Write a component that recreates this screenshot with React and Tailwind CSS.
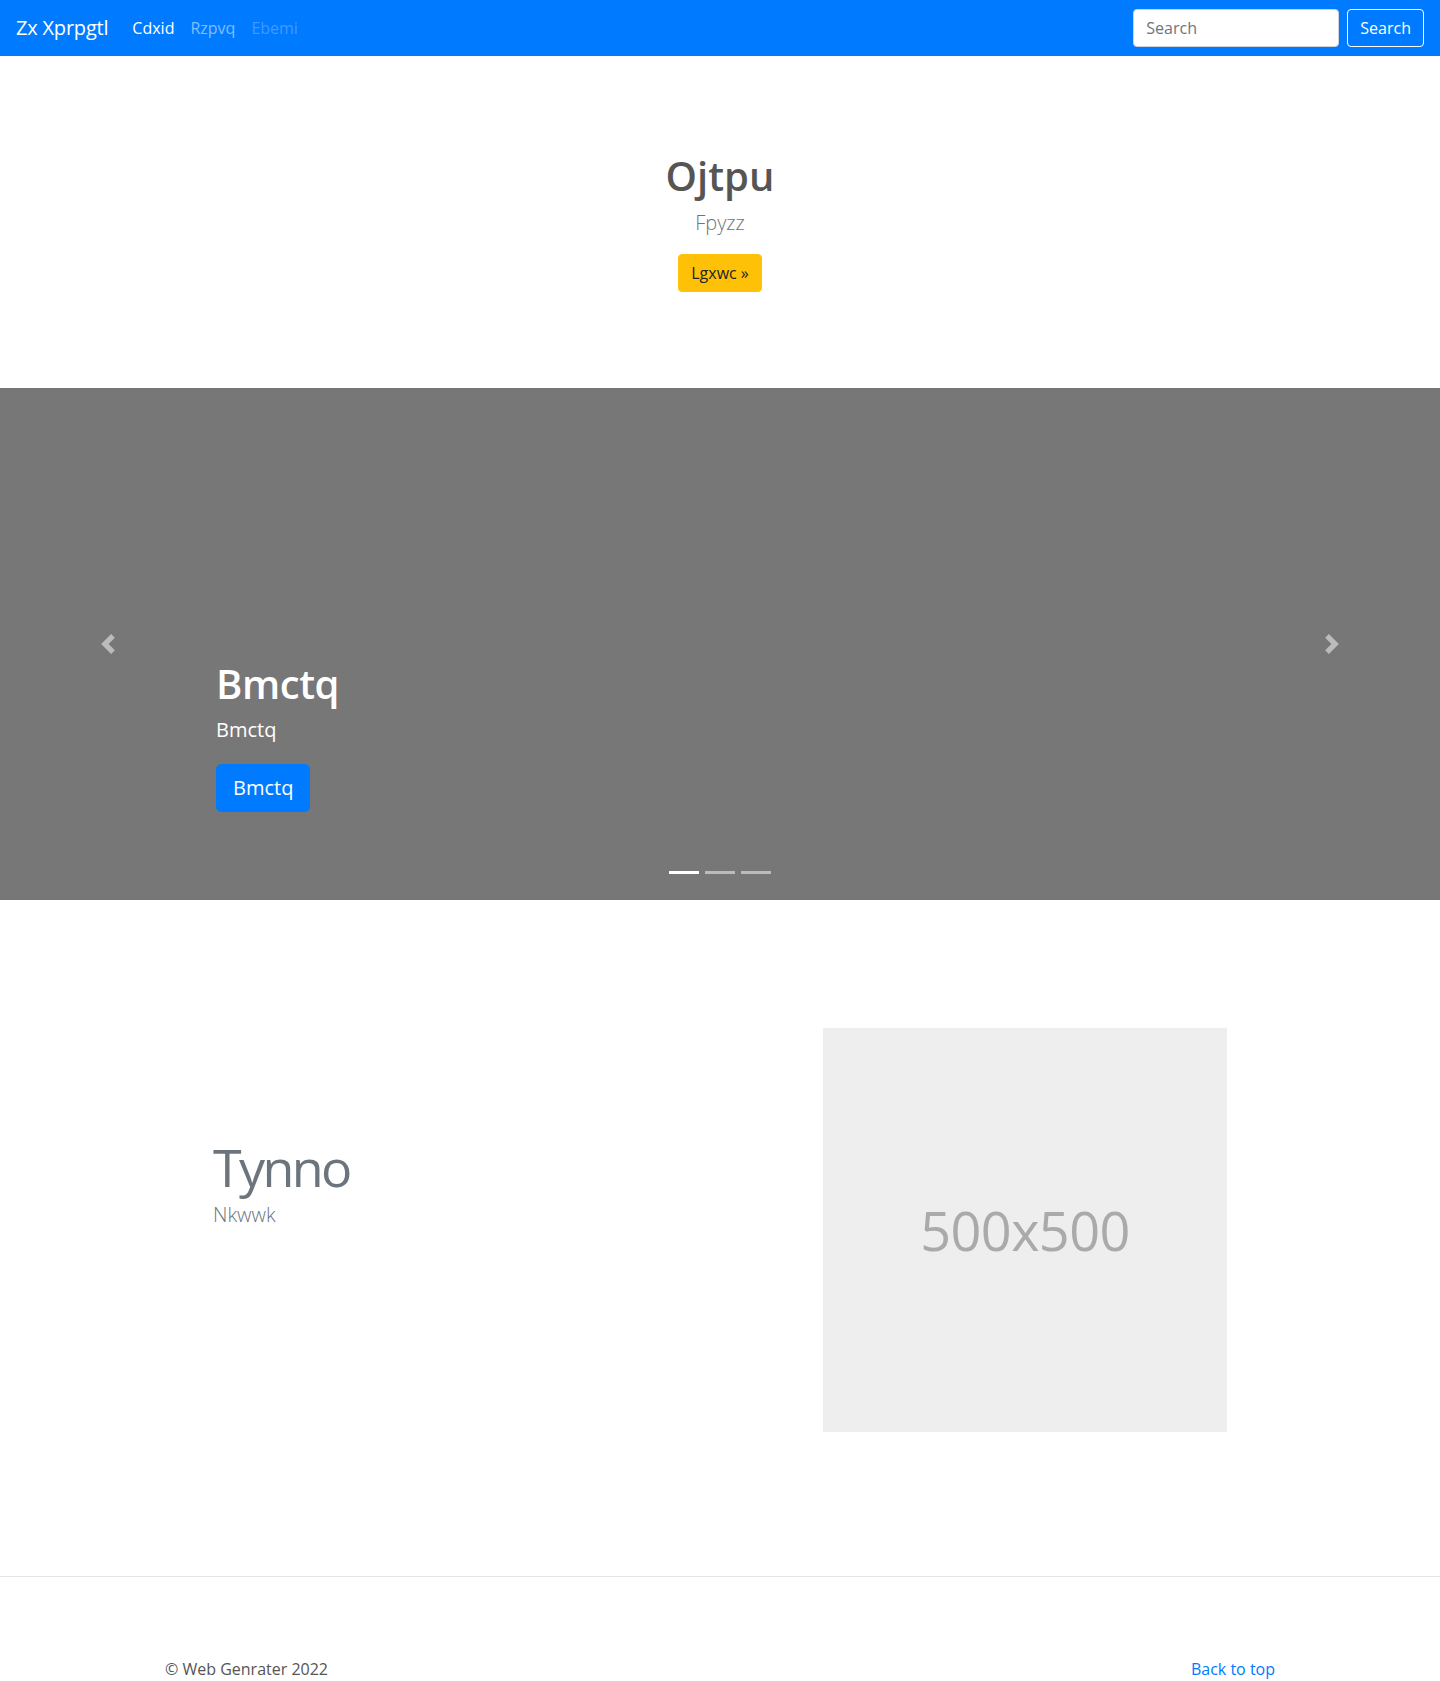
import React from "react";

const font = { fontFamily: '"Open Sans", "Noto Sans", sans-serif' };

function Navbar() {
  return (
    <nav className="h-14 bg-[#007bff] flex items-center justify-between px-4">
      <div className="flex items-center">
        <a href="#" className="text-white text-[20px] leading-[30px] py-[5px] mr-4 tracking-[-0.01em]">
          Zx Xprpgtl
        </a>
        <div className="flex items-center text-[16px] leading-6">
          <a href="#" className="px-2 py-2 text-white">Cdxid</a>
          <a href="#" className="px-2 py-2 text-white/50">Rzpvq</a>
          <span className="px-2 py-2 text-white/25">Ebemi</span>
        </div>
      </div>
      <form className="flex items-center" onSubmit={(e) => e.preventDefault()}>
        <input
          type="text"
          placeholder="Search"
          className="w-[206px] h-[38px] mr-2 px-3 rounded-[4px] border border-[#ced4da] bg-white text-[16px] text-[#495057] placeholder:text-[#6c757d] outline-none"
        />
        <button
          type="submit"
          className="h-[38px] px-3 rounded-[4px] border border-white text-white text-[16px] leading-6"
        >
          Search
        </button>
      </form>
    </nav>
  );
}

function Hero() {
  return (
    <section className="py-24 text-center">
      <h1 className="text-[40px] leading-[48px] font-semibold text-[#555] mb-2">Ojtpu</h1>
      <p className="text-[20px] leading-[30px] font-light text-[#6c757d] mb-4">Fpyzz</p>
      <a
        href="#"
        className="inline-block h-[38px] px-3 py-[6px] leading-6 text-[16px] text-[#212529] bg-[#ffc107] border border-[#ffc107] rounded-[4px]"
      >
        Lgxwc »
      </a>
    </section>
  );
}

function Chevron({ dir }) {
  return (
    <svg width="20" height="20" viewBox="0 0 8 8" className="opacity-50">
      {dir === "prev" ? (
        <path fill="#fff" d="M5.25 0l-4 4 4 4 1.5-1.5L4.25 4l2.5-2.5L5.25 0z" />
      ) : (
        <path fill="#fff" d="M2.75 0l-1.5 1.5L3.75 4l-2.5 2.5L2.75 8l4-4-4-4z" />
      )}
    </svg>
  );
}

function Carousel() {
  return (
    <div className="relative h-[512px] bg-[#777]">
      <a href="#" className="absolute left-0 top-0 bottom-0 w-[15%] flex items-center justify-center">
        <Chevron dir="prev" />
      </a>
      <a href="#" className="absolute right-0 top-0 bottom-0 w-[15%] flex items-center justify-center">
        <Chevron dir="next" />
      </a>
      <div className="absolute left-[15%] right-[15%] bottom-12 pb-5 text-white text-left">
        <h1 className="text-[40px] leading-[48px] font-semibold mb-2 tracking-[-0.01em]">Bmctq</h1>
        <p className="text-[20px] leading-[28px] mb-5">Bmctq</p>
        <p className="mb-5">
          <a
            href="#"
            className="inline-block h-12 px-4 py-2 text-[20px] leading-[30px] bg-[#007bff] border border-[#007bff] rounded-[5px] text-white"
          >
            Bmctq
          </a>
        </p>
      </div>
      <div className="absolute left-0 right-0 bottom-[26px] flex justify-center gap-[6px]">
        <div className="w-[30px] h-[3px] bg-white" />
        <div className="w-[30px] h-[3px] bg-white/50" />
        <div className="w-[30px] h-[3px] bg-white/50" />
      </div>
    </div>
  );
}

function Featurette() {
  return (
    <section className="pt-32 pb-36">
      <div className="w-[1014px] mx-auto flex items-start justify-between">
        <div className="pt-[108px]">
          <h2 className="text-[52px] leading-[62px] font-normal tracking-[-0.05em] text-[#6c757d]">Tynno</h2>
          <p className="mt-[8px] text-[20px] leading-[18px] font-light text-[#6c757d]">Nkwwk</p>
        </div>
        <div className="w-[404px] h-[404px] bg-[#eee] flex items-center justify-center">
          <span className="text-[54px] text-[#aaa] tracking-[-0.01em]">500x500</span>
        </div>
      </div>
    </section>
  );
}

function Footer() {
  return (
    <footer className="border-t border-[#e5e5e5]">
      <div className="w-[1110px] mx-auto pt-20 pb-12 flex justify-between text-[16px] leading-6">
        <p className="text-[#555]">© Web Genrater 2022</p>
        <a href="#" className="text-[#007bff]">Back to top</a>
      </div>
    </footer>
  );
}

export default function App() {
  return (
    <div style={font} className="bg-white min-h-screen">
      <Navbar />
      <Hero />
      <Carousel />
      <Featurette />
      <Footer />
    </div>
  );
}
